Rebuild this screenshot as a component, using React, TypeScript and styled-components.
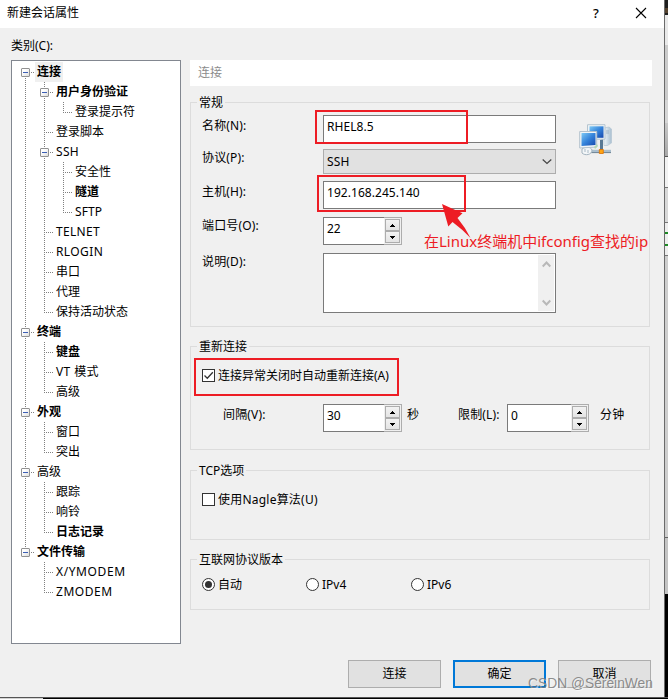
import React from 'react';
import styled, { createGlobalStyle, css } from 'styled-components';

const GlobalStyle = createGlobalStyle`
  * { box-sizing: border-box; }
  html, body { margin: 0; padding: 0; }
  body {
    width: 668px;
    height: 699px;
    overflow: hidden;
    font: 12px/18px "Noto Sans", "Noto Sans CJK SC", sans-serif;
    color: #000;
    background: #000;
  }
`;

const Desktop = styled.div`
  position: relative;
  display: grid;
  grid-template-columns: 664px 4px;
  grid-template-rows: 697px 2px;
  width: 668px;
  height: 699px;
  overflow: hidden;
  white-space: nowrap;
`;

const Dialog = styled.div`
  display: flex;
  flex-direction: column;
  background: #f0f0f0;
`;

const Backdrop = styled.div`
  border-left: 1px solid #6b6b6b;
  background: linear-gradient(
    #1e1e1e 0 8px, #55422e 8px 13px, #1e1e1e 13px 15px,
    #e9e9e9 15px 45px, #cbcbcb 45px 100px, #d6d6d6 100px 123px,
    #c8c8c8 123px, #a8a8a8 156px,
    #555 156px 157px, #f2f2f2 157px 187px, #777 187px 188px,
    #d8d8d8 188px 222px, #777 222px 223px, #eee 223px 232px,
    #1d8a24 232px 234px, #eee 234px 244px, #1d8a24 244px 246px,
    #eee 246px 255px, #777 255px 256px, #cecece 256px 537px,
    #666 537px 538px, #c4c4c4 538px 594px, #000 594px
  );
`;

const BottomEdge = styled.div`
  grid-column: 1 / -1;
  border-top: 1px solid #555;
  background: linear-gradient(to right, #d2d2d2 0 43px, #000 43px);
`;

const TitleBar = styled.div`
  display: flex;
  align-items: center;
  height: 28px;
  padding: 0 17px 3px 7px;
  background: #fff;
`;

const Title = styled.span`
  flex: 1;
`;

const HelpMark = styled.span`
  width: 8px;
  margin-right: 35px;
  font-size: 13px;
  font-weight: 500;
  text-align: center;
`;

const CategoryLabel = styled.div`
  height: 32px;
  padding: 9px 0 0 11px;
`;

const Body = styled.div`
  display: grid;
  grid-template-columns: 170px 462px;
  column-gap: 9px;
  height: 584px;
  padding-left: 11px;
`;

const Tree = styled.div`
  padding: 1px 0 0 4px;
  background: #fff;
  border: 1px solid #828790;
`;

const TreeRow = styled.div`
  display: flex;
  height: 20px;
`;

const dotsDown = 'repeating-linear-gradient(to bottom, #808080 0 1px, transparent 1px 2px)';
const dotsAcross = 'repeating-linear-gradient(to right, #808080 0 1px, transparent 1px 2px)';

const Guide = styled.span<{ $up?: boolean; $down?: boolean; $arm?: boolean }>`
  display: flex;
  width: 19px;
  height: 20px;
  padding: 6px 0 0 5px;
  background:
    ${p => dotsDown} 9px 0 / 1px ${p => (p.$up ? 10 : 0)}px no-repeat,
    ${p => dotsDown} 9px 10px / 1px ${p => (p.$down ? 10 : 0)}px no-repeat,
    ${p => dotsAcross} 9px 10px / ${p => (p.$arm ? 9 : 0)}px 1px no-repeat;
`;

const Toggle = styled.span`
  display: grid;
  place-items: center;
  width: 9px;
  height: 9px;
  border: 1px solid #919191;
  border-radius: 1px;
  background: linear-gradient(135deg, #fff 30%, #dcdcdc);
  &::after {
    content: '';
    width: 5px;
    height: 1px;
    background: #3c5fb4;
  }
`;

const NodeText = styled.span<{ $bold?: boolean; $selected?: boolean; $tracking?: number }>`
  padding: 0 2px;
  line-height: 19px;
  font-weight: ${p => (p.$bold ? 700 : 400)};
  letter-spacing: ${p => p.$tracking ?? 0}px;
  background: ${p => (p.$selected ? '#f0f0f0' : 'transparent')};
`;

const Panel = styled.div`
  display: flex;
  flex-direction: column;
`;

const PanelTitle = styled.div`
  height: 26px;
  margin-bottom: 16px;
  padding: 4px 8px;
  color: #8c8c8c;
  background: #fff;
`;

const Group = styled.section<{ $height: number; $gap?: number }>`
  width: 460px;
  height: ${p => p.$height}px;
  margin-bottom: ${p => p.$gap ?? 0}px;
  border: 1px solid #dcdcdc;
`;

const Legend = styled.div`
  width: fit-content;
  height: 18px;
  margin: -9px 0 0 6px;
  padding: 0 2px;
  background: #f0f0f0;
`;

const FieldRow = styled.div<{ $top: number }>`
  display: flex;
  align-items: flex-start;
  margin-top: ${p => p.$top}px;
  padding-left: 11px;
`;

const Label = styled.span<{ $width: number; $top?: number; $indent?: number }>`
  flex: none;
  width: ${p => p.$width}px;
  margin-top: ${p => p.$top ?? 0}px;
  padding-left: ${p => p.$indent ?? 0}px;
  letter-spacing: 0.15px;
`;

const fieldBox = css`
  display: flex;
  flex: none;
  width: 233px;
  border: 1px solid #7a7a7a;
  background: #fff;
`;

const TextField = styled.div`
  ${fieldBox}
  height: 28px;
  padding: 2px 3px;
  letter-spacing: 0.05px;
`;

const Select = styled.div`
  ${fieldBox}
  align-items: center;
  justify-content: space-between;
  height: 25px;
  padding: 0 3px;
  letter-spacing: 0.2px;
  background: #e1e1e1;
  border-color: #adadad;
`;

const TextArea = styled.div`
  ${fieldBox}
  justify-content: flex-end;
  height: 60px;
  padding: 1px;
`;

const ScrollTrack = styled.div`
  display: flex;
  flex-direction: column;
  align-items: center;
  justify-content: space-between;
  width: 16px;
  padding: 6px 0 5px;
  background: #f0f0f0;
`;

const SpinBox = styled.div<{ $width: number }>`
  display: flex;
  flex: none;
  justify-content: space-between;
  width: ${p => p.$width}px;
  height: 28px;
`;

const SpinValue = styled.div`
  flex: 1;
  padding: 2px 3px;
  background: #fff;
  border: 1px solid #7a7a7a;
  border-right: 0;
`;

const SpinButtons = styled.div`
  display: grid;
  grid-template-rows: 12px 12px;
  width: 18px;
  padding: 1px;
  border: 1px solid #adadad;
  border-left: 0;
  background: #f0f0f0;
`;

const SpinButton = styled.span`
  display: grid;
  place-items: center;
  border: 1px solid #adadad;
  background: linear-gradient(#f2f2f2, #e4e4e4);
`;

const OptionRow = styled.div<{ $top: number }>`
  display: flex;
  height: 18px;
  margin-top: ${p => p.$top}px;
  padding-left: 11px;
`;

const Option = styled.label<{ $width?: number; $tracking?: number }>`
  display: flex;
  align-items: flex-start;
  gap: 3px;
  width: ${p => (p.$width ? `${p.$width}px` : 'auto')};
  letter-spacing: ${p => p.$tracking ?? 0}px;
`;

const Check = styled.span`
  display: grid;
  place-items: center;
  width: 13px;
  height: 13px;
  margin-top: 2px;
  border: 1px solid #333;
  background: #fff;
`;

const Radio = styled(Check)<{ $on?: boolean }>`
  border-radius: 50%;
  &::after {
    content: '';
    display: ${p => (p.$on ? 'block' : 'none')};
    width: 7px;
    height: 7px;
    border-radius: 50%;
    background: #333;
  }
`;

const Footer = styled.div`
  display: flex;
  gap: 12px;
  padding: 16px 0 0 348px;
`;

const Button = styled.div<{ $primary?: boolean }>`
  display: grid;
  place-items: center;
  width: 93px;
  height: 28px;
  background: #e1e1e1;
  border: ${p => (p.$primary ? '2px solid #0078d7' : '1px solid #adadad')};
`;

const IconSlot = styled.div`
  margin: 8px 0 -8px 23px;
  height: 20px;
`;

const Highlight = styled.div<{ $x: number; $y: number; $w: number; $h: number }>`
  position: absolute;
  left: ${p => p.$x}px;
  top: ${p => p.$y}px;
  width: ${p => p.$w}px;
  height: ${p => p.$h}px;
  border: 2px solid #ed1c24;
`;

const Arrow = styled.svg`
  position: absolute;
  left: 440px;
  top: 202px;
`;

const Note = styled.div`
  position: absolute;
  left: 424px;
  top: 230px;
  font-size: 15px;
  line-height: 22px;
  color: #ed1c24;
`;

const Watermark = styled.div`
  position: absolute;
  left: 528px;
  top: 675px;
  font: 13.8px/18px "Liberation Sans", sans-serif;
  color: rgba(115, 115, 115, 0.8);
  text-shadow: 1px 1px 0 rgba(255, 255, 255, 0.6);
`;

type Node = { text: string; depth: number; bold?: boolean; open?: boolean; tracking?: number };

const nodes: Node[] = [
  { text: '连接', depth: 0, bold: true, open: true },
  { text: '用户身份验证', depth: 1, bold: true, open: true },
  { text: '登录提示符', depth: 2 },
  { text: '登录脚本', depth: 1 },
  { text: 'SSH', depth: 1, open: true, tracking: 0.3 },
  { text: '安全性', depth: 2 },
  { text: '隧道', depth: 2, bold: true },
  { text: 'SFTP', depth: 2, tracking: 0.1 },
  { text: 'TELNET', depth: 1, tracking: 0.3 },
  { text: 'RLOGIN', depth: 1, tracking: 0.4 },
  { text: '串口', depth: 1 },
  { text: '代理', depth: 1 },
  { text: '保持活动状态', depth: 1 },
  { text: '终端', depth: 0, bold: true, open: true },
  { text: '键盘', depth: 1, bold: true },
  { text: 'VT 模式', depth: 1, tracking: 0.4 },
  { text: '高级', depth: 1 },
  { text: '外观', depth: 0, bold: true, open: true },
  { text: '窗口', depth: 1 },
  { text: '突出', depth: 1 },
  { text: '高级', depth: 0, open: true },
  { text: '跟踪', depth: 1 },
  { text: '响铃', depth: 1 },
  { text: '日志记录', depth: 1, bold: true },
  { text: '文件传输', depth: 0, bold: true, open: true },
  { text: 'X/YMODEM', depth: 1, tracking: 0.6 },
  { text: 'ZMODEM', depth: 1, tracking: 0.55 },
];

function continues(index: number, depth: number) {
  for (let i = index + 1; i < nodes.length; i++) {
    if (nodes[i].depth < depth) return false;
    if (nodes[i].depth === depth) return true;
  }
  return false;
}

function CategoryTree() {
  return (
    <Tree>
      {nodes.map((node, i) => (
        <TreeRow key={i}>
          {Array.from({ length: node.depth + 1 }, (_, d) => {
            const own = d === node.depth;
            const down = continues(i, d);
            return (
              <Guide key={d} $up={own ? i > 0 : down} $down={down} $arm={own}>
                {own && node.open && <Toggle />}
              </Guide>
            );
          })}
          <NodeText $bold={node.bold} $selected={i === 0} $tracking={node.tracking}>{node.text}</NodeText>
        </TreeRow>
      ))}
    </Tree>
  );
}

function Spinner({ value, width }: { value: string; width: number }) {
  return (
    <SpinBox $width={width}>
      <SpinValue>{value}</SpinValue>
      <SpinButtons>
        <SpinButton>
          <svg width="5" height="3" shapeRendering="crispEdges"><path d="M2 0h1v1h1v1h1v1H0V2h1V1h1z" /></svg>
        </SpinButton>
        <SpinButton>
          <svg width="5" height="3" shapeRendering="crispEdges"><path d="M0 0h5v1H4v1H3v1H2V2H1V1H0z" /></svg>
        </SpinButton>
      </SpinButtons>
    </SpinBox>
  );
}

function Chevron({ up, color, size, weight }: { up?: boolean; color: string; size: number; weight: number }) {
  return (
    <svg width={size} height="7" viewBox={`0 0 ${size} 7`} fill="none" stroke={color} strokeWidth={weight}>
      <path d={up ? `M.7 5.5 ${size / 2} 1.5 ${size - 0.7} 5.5` : `M.7 1.5 ${size / 2} 5.5 ${size - 0.7} 1.5`} />
    </svg>
  );
}

function NetworkIcon() {
  return (
    <svg width="34" height="34" viewBox="0 0 34 34">
      <defs>
        <linearGradient id="screen" x1="0" y1="0" x2="1" y2="1">
          <stop offset="0" stopColor="#7cc8f5" />
          <stop offset="0.5" stopColor="#3583da" />
          <stop offset="1" stopColor="#1648ad" />
        </linearGradient>
        <linearGradient id="tower" x1="0" x2="1">
          <stop offset="0" stopColor="#eef5fa" />
          <stop offset="1" stopColor="#a9bfd0" />
        </linearGradient>
      </defs>
      <path d="M25 5l5-1 2.500 2v14l-4 2.500H25z" fill="url(#tower)" stroke="#b5c6d3" strokeWidth=".7" />
      <path d="M27 8h3m-3 2h3" stroke="#91a8ba" strokeWidth=".7" />
      <path d="M21 17l3-1v12h-3z" fill="#587894" />
      <path d="M8.500 1.700h17.500v14.500H8.500z" fill="#eef3f6" stroke="#b5c4cf" />
      <path d="M10.500 3.300h14v11.500h-14z" fill="url(#screen)" />
      <path d="M12 28.500h20" stroke="#758a9b" strokeWidth="3.200" />
      <path d="M12 28h20" stroke="#c9dce9" strokeWidth="1.300" />
      <path d="M3 26c4-3 9-2 10 1 0 5-7 6-10 3z" fill="#f3f6f8" stroke="#a3b3bf" />
      <path d="M6 26v3m3-2v3" stroke="#a9b9c5" />
      <path d="M.700 8.500h17v15.500l-17 1z" fill="#f1f5f7" stroke="#b4c2cd" />
      <path d="M2.500 10h14v12l-14 1z" fill="url(#screen)" />
      <path d="M15 24l3-3 1 2-3 3z" fill="#b4d7b5" />
      <path d="M20.300 26.500h4v4h-4z" fill="#ffa514" stroke="#df7100" strokeWidth=".8" />
    </svg>
  );
}

export default function App() {
  return (
    <Desktop>
      <GlobalStyle />
      <Dialog>
        <TitleBar>
          <Title>新建会话属性</Title>
          <HelpMark>?</HelpMark>
          <svg width="12" height="12" stroke="#000" strokeWidth="1.1"><path d="M1 1l10 10M11 1L1 11" /></svg>
        </TitleBar>
        <CategoryLabel>类别(C):</CategoryLabel>
        <Body>
          <CategoryTree />
          <Panel>
            <PanelTitle>连接</PanelTitle>
            <Group $height={225} $gap={19}>
              <Legend>常规</Legend>
              <FieldRow $top={3}>
                <Label $width={121} $top={2}>名称(N):</Label>
                <TextField>RHEL8.5</TextField>
                <IconSlot><NetworkIcon /></IconSlot>
              </FieldRow>
              <FieldRow $top={6}>
                <Label $width={121}>协议(P):</Label>
                <Select>SSH<Chevron color="#444" size={10} weight={1.2} /></Select>
              </FieldRow>
              <FieldRow $top={7}>
                <Label $width={121} $top={2}>主机(H):</Label>
                <TextField>192.168.245.140</TextField>
              </FieldRow>
              <FieldRow $top={8}>
                <Label $width={121}>端口号(O):</Label>
                <Spinner value="22" width={79} />
              </FieldRow>
              <FieldRow $top={8}>
                <Label $width={121}>说明(D):</Label>
                <TextArea>
                  <ScrollTrack>
                    <Chevron up color="#b8b8b8" size={9} weight={2} />
                    <Chevron color="#b8b8b8" size={9} weight={2} />
                  </ScrollTrack>
                </TextArea>
              </FieldRow>
            </Group>
            <Group $height={104} $gap={20}>
              <Legend>重新连接</Legend>
              <OptionRow $top={11}>
                <Option>
                  <Check>
                    <svg width="11" height="11" fill="none" stroke="#333" strokeWidth="1.3"><path d="M1.500 5.500l2.800 2.800 5.500-6" /></svg>
                  </Check>
                  连接异常关闭时自动重新连接(A)
                </Option>
              </OptionRow>
              <FieldRow $top={19}>
                <Label $width={121} $top={2} $indent={21}>间隔(V):</Label>
                <Spinner value="30" width={79} />
                <Label $width={56} $top={2} $indent={5}>秒</Label>
                <Label $width={49} $top={2}>限制(L):</Label>
                <Spinner value="0" width={82} />
                <Label $width={50} $top={2} $indent={11}>分钟</Label>
              </FieldRow>
            </Group>
            <Group $height={70} $gap={19}>
              <Legend>TCP选项</Legend>
              <OptionRow $top={11}>
                <Option $tracking={0.22}><Check />使用Nagle算法(U)</Option>
              </OptionRow>
            </Group>
            <Group $height={51}>
              <Legend>互联网协议版本</Legend>
              <OptionRow $top={7}>
                <Option $width={104}><Radio $on />自动</Option>
                <Option $width={105}><Radio />IPv4</Option>
                <Option><Radio />IPv6</Option>
              </OptionRow>
            </Group>
          </Panel>
        </Body>
        <Footer>
          <Button>连接</Button>
          <Button $primary>确定</Button>
          <Button>取消</Button>
        </Footer>
      </Dialog>
      <Backdrop />
      <BottomEdge />
      <Highlight $x={315} $y={110} $w={153} $h={34} />
      <Highlight $x={317} $y={175} $w={149} $h={37} />
      <Highlight $x={194} $y={358} $w={205} $h={38} />
      <Arrow width="34" height="40"><path d="M2 2L22.500 11.300 17.500 16Q25 25 30.500 36 22 27 12.500 20L8.300 24.500z" fill="#ed1c24" /></Arrow>
      <Note>在Linux终端机中ifconfig查找的ip</Note>
      <Watermark>CSDN @SereinWen</Watermark>
    </Desktop>
  );
}
